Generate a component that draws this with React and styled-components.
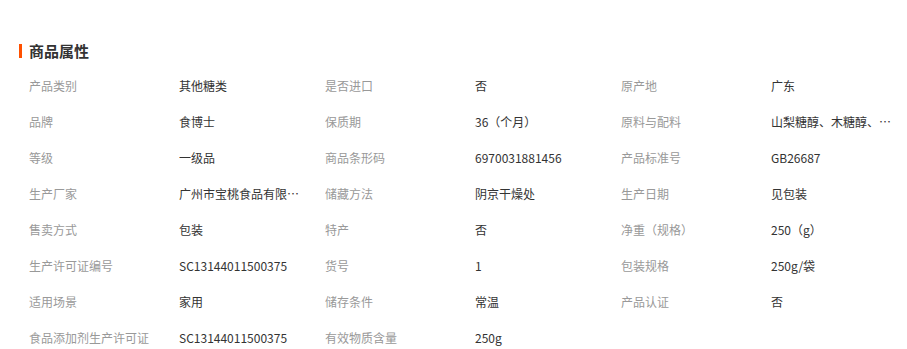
import React from "react";
import styled, { createGlobalStyle } from "styled-components";

const Global = createGlobalStyle`
  html, body { margin: 0; padding: 0; background: #fff; }
  body { font-family: "Noto Sans CJK SC", "Noto Sans", sans-serif; }
`;

const Wrap = styled.section`
  padding: 41px 0 0 19px;
  width: 907px;
  box-sizing: border-box;
`;

const Title = styled.h3`
  display: flex;
  align-items: center;
  gap: 7px;
  margin: 0 0 7px 0;
  height: 20px;
  font-size: 15px;
  font-weight: bold;
  color: #333;
  line-height: 20px;
  &::before {
    content: "";
    width: 3px;
    height: 14px;
    background: #ff5000;
  }
`;

const Grid = styled.div`
  display: grid;
  grid-template-columns: repeat(3, 150px 146px);
  padding-left: 10px;
`;

const Cell = styled.div`
  height: 36px;
  line-height: 36px;
  font-size: 12px;
  color: ${(p) => (p.$label ? "#999" : "#333")};
  white-space: nowrap;
  overflow: hidden;
  text-overflow: ellipsis;
  padding-right: ${(p) => (p.$label ? "0" : "24px")};
`;

const data = [
  ["产品类别", "其他糖类", "是否进口", "否", "原产地", "广东"],
  ["品牌", "食博士", "保质期", "36（个月）", "原料与配料", "山梨糖醇、木糖醇、麦芽糖醇"],
  ["等级", "一级品", "商品条形码", "6970031881456", "产品标准号", "GB26687"],
  ["生产厂家", "广州市宝桃食品有限公司", "储藏方法", "阴京干燥处", "生产日期", "见包装"],
  ["售卖方式", "包装", "特产", "否", "净重（规格）", "250（g）"],
  ["生产许可证编号", "SC13144011500375", "货号", "1", "包装规格", "250g/袋"],
  ["适用场景", "家用", "储存条件", "常温", "产品认证", "否"],
  ["食品添加剂生产许可证", "SC13144011500375", "有效物质含量", "250g", "", ""],
];

export default function App() {
  return (
    <>
      <Global />
      <Wrap>
        <Title>商品属性</Title>
        <Grid>
          {data.flatMap((row, r) =>
            row.map((t, i) => (
              <Cell key={r + "-" + i} $label={i % 2 === 0}>
                {t}
              </Cell>
            ))
          )}
        </Grid>
      </Wrap>
    </>
  );
}
